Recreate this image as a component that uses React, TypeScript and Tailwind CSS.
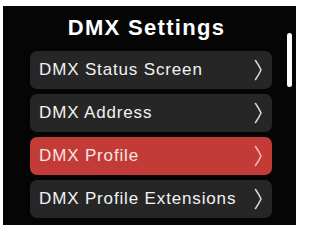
const items = [
  { label: "DMX Status Screen", active: false },
  { label: "DMX Address", active: false },
  { label: "DMX Profile", active: true },
  { label: "DMX Profile Extensions", active: false },
];

const Chevron = ({ active }: { active: boolean }) => (
  <svg width="9" height="22" viewBox="0 0 9 22" fill="none">
    <path
      d="M1.5 1.5 Q5 6.5 7 11 Q5 15.5 1.5 20.5"
      stroke={active ? "#f4b7b3" : "#d4d4d4"}
      strokeWidth="1.6"
      strokeLinecap="round"
      strokeLinejoin="round"
    />
  </svg>
);

const App = () => {
  return (
    <div className="w-[300px] h-[231px] bg-white pl-[3px] pr-[4px] pt-[6px] pb-[6px]">
      <div
        className="relative w-full h-full bg-[#050505] pt-[9px]"
        style={{ fontFamily: '"Liberation Sans", Arial, sans-serif' }}
      >
        <h1 className="text-center text-[22px] leading-[26px] font-bold text-white tracking-[1.3px] pr-[6px]">
          DMX Settings
        </h1>

        <div className="mt-[10px] ml-[27px] w-[242px] flex flex-col gap-[5px]">
          {items.map((item) => (
            <div
              key={item.label}
              className={
                item.active
                  ? "h-[38px] rounded-[7px] bg-[#c23b36] flex items-center justify-between pl-[9px] pr-[9px]"
                  : "h-[38px] rounded-[7px] bg-[#262626] flex items-center justify-between pl-[9px] pr-[9px]"
              }
            >
              <span
                className={
                  item.active
                    ? "text-[17px] tracking-[0.85px] text-[#fbe4e2]"
                    : "text-[17px] tracking-[0.85px] text-[#f2f2f2]"
                }
              >
                {item.label}
              </span>
              <Chevron active={item.active} />
            </div>
          ))}
        </div>

        {/* scroll indicator */}
        <div className="absolute left-[284px] top-[27px] w-[5px] h-[54px] rounded-full bg-white" />
      </div>
    </div>
  );
};

export default App;
